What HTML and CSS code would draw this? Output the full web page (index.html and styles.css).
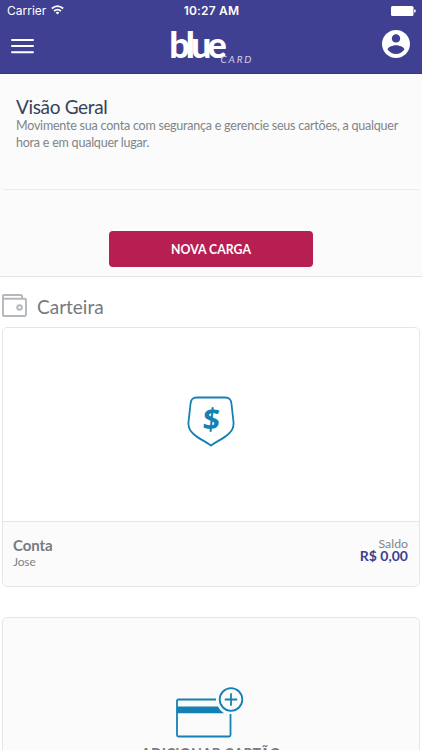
FILE: index.html
```html
<!DOCTYPE html>
<html lang="pt-BR">
<head>
<meta charset="utf-8">
<title>Blue Card</title>
<link rel="stylesheet" href="styles.css">
</head>
<body>
<header class="header">
  <div class="status">
    <div class="carrier"><span>Carrier</span>
      <svg width="13" height="10" viewBox="0 0 13 10" fill="none" stroke="#fff" stroke-width="1.8"><path d="M.8 3.5Q6.500-1.300 12.200 3.500M3 6Q6.500 3.200 10 6"/><path d="M4.600 7.500Q6.500 6.200 8.400 7.500L6.500 9.600Z" fill="#fff" stroke="none"/></svg>
    </div>
    <span class="time">10:27 AM</span>
    <svg class="battery" width="25" height="10" viewBox="0 0 25 10" fill="#fff"><rect width="22.500" height="10" rx="1.500"/><path d="M23.200 3.300Q24.800 3.500 24.800 5T23.200 6.700Z"/></svg>
  </div>
  <nav class="nav">
    <svg class="menu" width="23" height="16" viewBox="0 0 23 16" stroke="#fff" stroke-width="2" stroke-linecap="round"><path d="M1 2H22M1 8H22M1 14.200H22"/></svg>
    <svg class="logo" width="84" height="36" viewBox="0 0 84 36"><text class="logo-blue" x="0.200" y="29">blue</text><text class="logo-card" x="51.500" y="33.500">CARD</text></svg>
    <svg class="user" width="28" height="28" viewBox="2 2 20 20" fill="#fff"><path d="M12 2C6.480 2 2 6.480 2 12s4.480 10 10 10 10-4.480 10-10S17.520 2 12 2zm0 3c1.660 0 3 1.340 3 3s-1.340 3-3 3-3-1.340-3-3 1.340-3 3-3zm0 14.200c-2.500 0-4.710-1.280-6-3.220.03-1.990 4-3.080 6-3.080 1.990 0 5.970 1.090 6 3.080-1.290 1.940-3.500 3.220-6 3.220z"/></svg>
  </nav>
</header>
<section class="overview">
  <div class="intro">
    <h1>Visão Geral</h1>
    <p>Movimente sua conta com segurança e gerencie seus cartões, a qualquer<br>hora e em qualquer lugar.</p>
  </div>
  <button class="load">NOVA CARGA</button>
</section>
<main>
  <h2 class="wallet">
    <svg width="25" height="23" viewBox="0 0 25 23" fill="none" stroke="#b4b8bd" stroke-width="1.900"><path d="M1 4V2Q1 1 2 1H19Q20 1 20 2V4.500M1 3.500Q1 4.800 2.500 4.800H22.700Q24 4.800 24 6V20.800Q24 22 22.700 22H2.300Q1 22 1 20.800Z"/><circle cx="17.500" cy="13.500" r="2.300"/></svg>
    <span>Carteira</span>
  </h2>
  <article class="card">
    <div class="card-art">
      <svg width="48" height="51" viewBox="0 0 48 51"><path d="M10 1.500H38C43 1.500 44 4 44.500 8L46.500 26C47 31 45 35 41.500 38C36 43 30 45 24 49.500C18 45 12 43 6.500 38C3 35 1 31 1.500 26L3.500 8C4 4 5 1.500 10 1.500Z" fill="none" stroke="#1480b4" stroke-width="1.800"/><text class="dollar" transform="translate(23.500 33.500) skewX(-5)" text-anchor="middle">$</text></svg>
    </div>
    <div class="card-info">
      <div><div class="name">Conta</div><div class="owner">Jose</div></div>
      <div class="balance"><div class="label">Saldo</div><div class="amount">R$ 0,00</div></div>
    </div>
  </article>
  <article class="card add">
    <svg width="68" height="51" viewBox="0 0 68 51" fill="none" stroke="#1480b4"><path d="M40 12.500H2.500Q1 12.500 1 14V48Q1 49.500 2.500 49.500H53Q54.500 49.500 54.500 48V27" stroke-width="1.800"/><path d="M1 19.500H42Q43.500 23.500 48 26.200H1Z" fill="#1480b4" stroke="none"/><circle cx="55" cy="12.500" r="11.300" stroke-width="1.800"/><path d="M48.800 12.500H61.200M55 6.300V18.700" stroke-width="1.800"/></svg>
    <div class="add-label">ADICIONAR CARTÃO</div>
  </article>
</main>
</body>
</html>
```
FILE: styles.css
```css
* { box-sizing: border-box; }
html { height: 100%; overflow: hidden; }
body { margin: 0; height: 750px; overflow: hidden; background: #fff; font-family: Lato, sans-serif; color: #808489; }
svg { display: block; flex: none; }
h1, h2, p { margin: 0; font-weight: 400; }
.header { height: 74px; background: #3f4092; border-bottom: 1px solid #353681; color: #fff; }
.status { height: 22px; display: grid; grid-template-columns: 1fr auto 1fr; align-items: center; padding: 0 6px 0 7px; font: 12px/22px Inter, sans-serif; }
.carrier { display: flex; align-items: center; gap: 5px; }
.carrier svg { margin-top: -2px; }
.time { font-weight: 600; font-size: 12px; letter-spacing: .2px; }
.battery { justify-self: end; }
.nav { height: 51px; display: grid; grid-template-columns: 1fr auto 1fr; padding: 0 12px 0 11px; align-items: start; }
.menu { margin-top: 16px; }
.logo { margin-top: 7px; overflow: visible; }
.user { margin-top: 8px; justify-self: end; }
.logo-blue { font: 900 36px Lato, sans-serif; letter-spacing: -3.9px; fill: #fff; }
.logo-card { font: italic 400 10px Lato, sans-serif; letter-spacing: 1.800px; fill: #d0d0e8; }
.overview { height: 203px; background: #fbfbfb; border-bottom: 1px solid #e4e4e5; }
.intro { height: 116px; margin: 0 3px; padding: 21px 13px 0; border-bottom: 1px solid #ececed; }
.intro h1 { font-size: 19px; line-height: 24px; color: #34435a; letter-spacing: -.35px; }
.intro p { font-size: 12.500px; line-height: 17px; margin-top: -2px; white-space: nowrap; letter-spacing: -.22px; }
.load { display: block; width: 204px; height: 36px; margin: 41px auto 0 109px; padding: 0; border: 0; border-radius: 4px; background: #b71e52; color: #fff; font: 700 12.300px Lato, sans-serif; }
.wallet { height: 50px; padding: 17px 0 0 2px; display: flex; align-items: flex-start; gap: 10px; font-size: 19px; line-height: 25px; color: #75797e; }
.card { width: 418px; height: 260px; margin: 0 2px; border: 1px solid #e6e6e7; border-radius: 5px; background: #fff; overflow: hidden; }
.card-art { height: 193px; padding: 68px 0 0 184px; }
.card-info { height: 65px; border-top: 1px solid #e6e6e7; background: #fbfbfb; padding: 14px 11px 0 10px; display: flex; justify-content: space-between; }
.name { font-size: 15px; font-weight: 700; line-height: 18px; color: #777b82; letter-spacing: -.1px; }
.owner { font-size: 12px; line-height: 15px; letter-spacing: -.15px; }
.balance { text-align: right; }
.label { font-size: 12.300px; line-height: 15px; }
.amount { font-size: 14px; line-height: 12px; margin-top: -1px; font-weight: 700; color: #3f4092; }
.dollar { font: 700 30px "Open Sans", sans-serif; fill: #1480b4; }
.add { margin-top: 30px; background: #fbfbfb; padding: 69px 0 0; }
.add svg { margin-left: 173px; }
.add-label { margin-top: 7px; text-align: center; font-size: 14.200px; line-height: 18px; font-weight: 700; color: #777b82; }
```
